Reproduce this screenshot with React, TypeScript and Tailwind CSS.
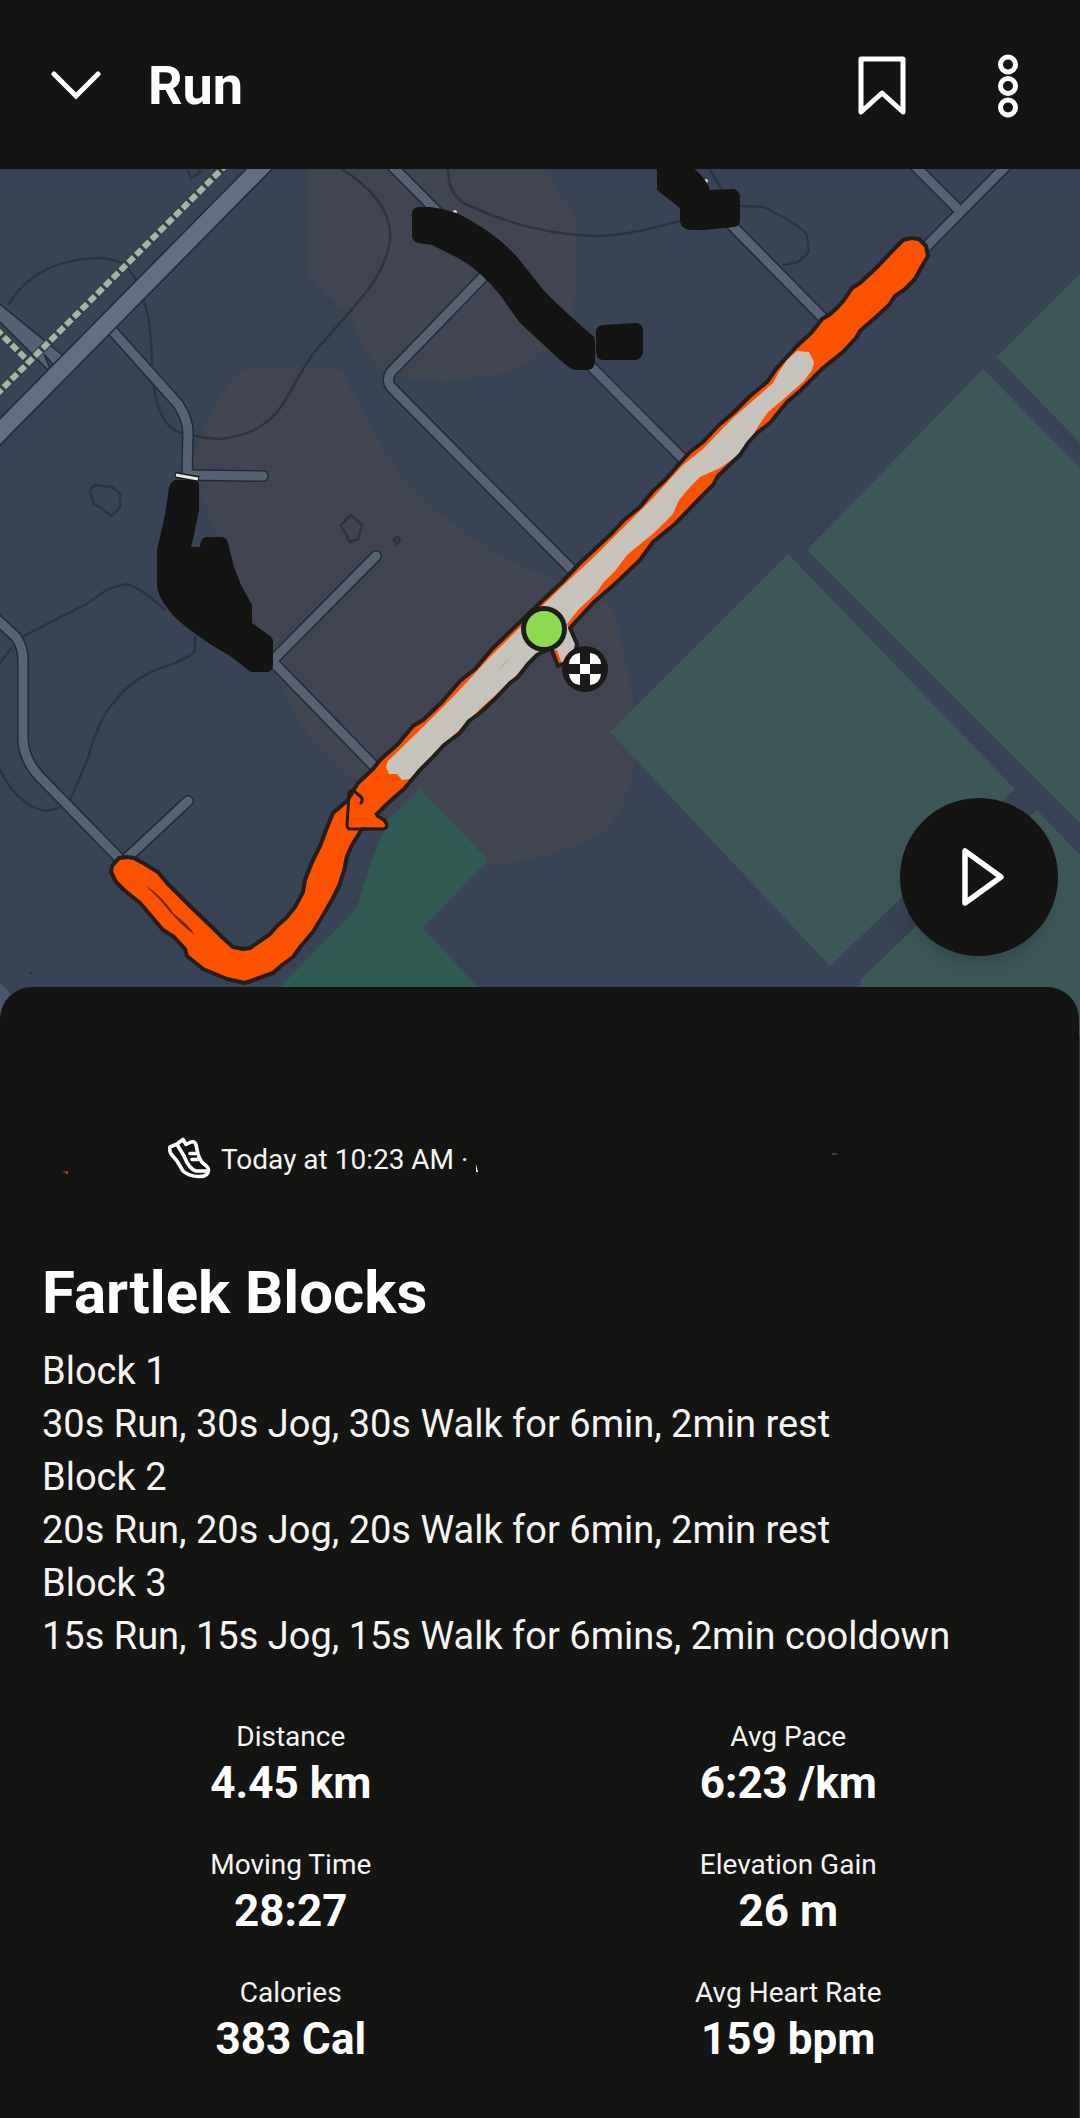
import React from "react";

const stats = [
  { label: "Distance", value: "4.45 km" },
  { label: "Avg Pace", value: "6:23 /km" },
  { label: "Moving Time", value: "28:27" },
  { label: "Elevation Gain", value: "26 m" },
  { label: "Calories", value: "383 Cal" },
  { label: "Avg Heart Rate", value: "159 bpm" },
];

const description = [
  "Block 1",
  "30s Run, 30s Jog, 30s Walk for 6min, 2min rest",
  "Block 2",
  "20s Run, 20s Jog, 20s Walk for 6min, 2min rest",
  "Block 3",
  "15s Run, 15s Jog, 15s Walk for 6mins, 2min cooldown",
];

const roads = [
  "M110 328L178 404Q188 420 188 432L187 480",
  "M187 475L263 476",
  "M387 161L690 466",
  "M486 274L391 372Q386 380 391 387L577 575",
  "M700 193L827 322",
  "M1010 162L920 253",
  "M910 161L957 208",
  "M-6 617L16 637Q23 647 23 660L23 740Q24 760 40 777L118 857",
  "M128 857L188 801",
  "M376 556L272 661L377 769",
];

const contours = [
  "M8 305Q35 260 97 258Q110 258 122 263Q150 285 152 360Q153 432 188 434Q200 438 220 439Q256 435 274 415C290 400 300 365 325 340C350 310 385 280 390 240C393 210 368 185 340 168",
  "M187 168L191 179L200 172L198 168",
  "M90 490L95 485L112 487L120 493L120 508L111 516L100 507L94 505Z",
  "M341 525L351 515L362 525L358 539L350 542Z",
  "M394 540L398 537L400 541L397 544Z",
  "M448 168Q448 198 470 206Q530 234 595 236Q630 236 690 218",
  "M740 206L764 207Q805 228 807 236L809 252L798 262L783 265",
  "M709 168L722 190M735 228L754 254",
  "M22 637L88 603L108 589L126 584Q142 588 165 610M195 635V650Q193 656 170 665Q135 675 116 700Q100 715 88 758L70 800",
  "M12 647L-2 665M-2 764C8 790 26 808 46 811L60 808",
  "M30 972L32 974",
];

const route =
  "M911 238L903 240L896 247L876 268L860 283L852 288L844 300L837 308L829 315L822 319L812 332L797 346L784 360L776 369L767 382L750 396L733 413L719 425L703 442L690 452L680 463L665 480L653 491L640 507L624 520L613 532L595 549L580 563L562 582L543 600L520 622L493 648L475 669L460 681L442 702L423 720L413 726L398 744L380 760L373 769L358 783L352 793L348 800L333 813L326 830L320 846L312 862L305 880L303 892L295 907L286 918L277 926L270 934L257 943L250 948L243 949L233 947L222 937L213 928L190 906L167 883L158 872L143 863L134 858L127 857L119 858L112 866L111 872L116 882L124 890L140 903L152 917L163 930L174 937L185 949L187 956L203 969L227 979L245 983L259 978L273 973L282 965L293 957L301 946L313 932L325 912L333 898L339 886L344 871L347 856L352 845L362 829L386 827L384 820L378 817L376 815L388 803L404 789L420 770L430 760L444 745L460 733L469 721L480 713L495 699L510 683L518 677L528 664L537 655L551 648L558 666L574 659L577 644L570 628L593 603L616 583L640 560L653 542L675 524L700 498L713 485L718 476L740 455L748 443L757 433L770 423L787 402L800 391L823 368L843 352L856 338L860 331L876 317L889 305L895 296L904 290L915 279L921 268L928 256L926 246L919 239Z";

const walked =
  "M797 351L809 352L814 362L812 370L803 382L780 402L768 412L757 428L750 442L740 454L720 468L700 477L690 487L679 500L673 514L655 532L627 555L615 571L603 583L597 592L578 610L567 624L576 647L562 664L557 650L545 648L537 653L510 682L480 709L457 732L430 758L410 779L402 780L397 774L389 774L386 767L388 761L420 730L455 695L490 657L543 605L567 582L595 556L653 498L683 465L703 449L733 418L773 383L779 372L787 360Z";

function RouteMap() {
  return (
    <svg
      viewBox="0 169 1080 868"
      className="block w-full bg-[#394356]"
      role="img"
      aria-label="Route map"
    >
      {/* terrain */}
      <path
        d="M308 160V275Q330 300 352 318Q360 350 385 372Q430 388 500 374Q545 360 572 320Q580 250 574 215L538 160Z"
        fill="#404551"
      />
      <path
        d="M240 371Q290 362 342 371Q370 430 400 475Q450 530 510 560L612 606Q628 660 636 720Q640 790 606 830Q550 866 440 868Q400 840 375 800L308 735Q275 680 262 640L190 470Q205 410 240 371Z"
        fill="#404551"
      />
      <g fill="#3d5759">
        <path d="M807 550L983 369L1080 468V823Z" />
        <path d="M997 357L1080 274V443Z" />
        <path d="M610 732L788 554L1015 789L830 966Z" />
        <path d="M1037 810L1080 855V1037H860V980Z" />
      </g>
      <path
        d="M420 789L488 860L423 928L480 989H278L357 908L370 865L388 820Z"
        fill="#2e5a52"
      />
      <path d="M-4 978L20 1004V1037H-4Z" fill="#4a5667" />

      <g fill="none" stroke="#2b363c" strokeWidth="2.5">
        {contours.map((d) => (
          <path key={d} d={d} />
        ))}
      </g>

      {/* roads */}
      <g fill="none" stroke="#1f2b3d" strokeWidth="12" strokeLinecap="round">
        {roads.map((d) => (
          <path key={d} d={d} />
        ))}
      </g>
      <g fill="none" stroke="#566172" strokeWidth="9" strokeLinecap="round">
        {roads.map((d) => (
          <path key={d} d={d} />
        ))}
      </g>
      <path
        d="M-4 301L66 358L56 368L44 354L52 374L-4 318Z"
        fill="#566172"
        stroke="#1f2b3d"
        strokeWidth="1.5"
      />
      <path d="M-10 442L275 153" stroke="#1f2b3d" strokeWidth="20" />
      <path d="M-10 442L275 153" stroke="#626e82" strokeWidth="17" />
      <g fill="none">
        <path d="M-4 395L228 163M-4 329L29 362" stroke="#30433f" strokeWidth="8" />
        <path
          d="M-4 395L228 163M-4 329L29 362"
          stroke="#a3b4a8"
          strokeWidth="6"
          strokeDasharray="8 3"
        />
      </g>
      <path d="M175 475L199 479" stroke="#1c1c1a" strokeWidth="6" />
      <path d="M176 475L198 479" stroke="#e8e8e6" strokeWidth="3" />
      <circle cx="706" cy="181" r="2" fill="#d8d8d6" />
      <circle cx="455" cy="212" r="2" fill="#d8d8d6" />

      {/* hidden places */}
      <g fill="#141412">
        <path d="M175 480H196Q200 482 199 488V510L194 535L191 547H200Q200 538 206 537H222Q227 538 228 543L234 567L241 585L252 605V623L270 636Q273 638 273 642V666Q272 671 268 672H251L230 656L213 646L200 637Q175 620 168 609Q157 595 157 585V550L165 515L169 488Q171 481 175 480Z" />
        <path d="M412 214Q412 207 420 207H430Q455 209 478 225Q500 238 518 258L545 292Q565 312 594 337Q595 340 595 345V362Q594 370 587 370H575Q570 369 560 360L520 323L500 295Q480 270 458 258L432 245L418 243Q412 241 412 235Z" />
        <path d="M596 331Q597 325 603 325L636 323Q643 324 643 330V352Q642 359 635 360H603Q597 360 596 352Z" />
        <path d="M657 160V190Q662 194 680 208V221Q681 229 690 230H705L734 227Q740 226 740 220V196Q739 190 733 189L710 190Q708 180 690 165Z" />
      </g>

      {/* route */}
      <path d={route} fill="#fc5200" />
      <path d={walked} fill="#c5c3bb" />
      <path
        d={route}
        fill="none"
        stroke="#241f1b"
        strokeWidth="4"
        strokeLinejoin="round"
      />
      <path
        d="M350 827L351 797L362 806L378 817L385 824V828Z"
        fill="#fc5200"
      />
      <path
        d="M361 803Q364 799 360 796L354 791Q349 789 349 794L347 825Q347 829 351 829L384 829Q390 826 384 820L377 816"
        fill="none"
        stroke="#2b1a12"
        strokeWidth="3"
        strokeLinecap="round"
      />
      <path d="M145 885Q162 896 174 914Q188 924 195 935Q182 926 172 914Q160 899 145 885" fill="#7a2408" />
      <path d="M499 670L511 656L504 665Z" fill="#e0672f" />

      {/* start and finish */}
      <circle cx="544" cy="629" r="23" fill="#1c1e1b" />
      <circle cx="544" cy="629" r="18" fill="#8dda51" />
      <circle cx="585" cy="669" r="23" fill="#1a1a19" />
      <g fill="#ffffff">
        <path d="M580 653V664H569Q570 654 580 653Z" />
        <path d="M590 653V664H601Q600 654 590 653Z" />
        <path d="M580 685V674H569Q570 684 580 685Z" />
        <path d="M590 685V674H601Q600 684 590 685Z" />
        <path d="M580 664H590V674H580Z" />
      </g>
    </svg>
  );
}

function ShoeIcon() {
  return (
    <svg
      viewBox="168 1136 43 42"
      className="h-[42px] w-[43px]"
      fill="none"
      stroke="currentColor"
      strokeWidth="3.6"
      strokeLinejoin="round"
      strokeLinecap="round"
      aria-hidden="true"
    >
      <path d="M170 1146L177 1143L183 1138.5L186 1143.5L191 1141Q195 1140 196 1144L198 1153Q200 1160 204 1163Q208.500 1166 208.500 1169Q208 1175.500 200 1175.500Q190 1176 183 1170L177 1160L171 1153Q169 1149 170 1146Z" />
      <path d="M177 1143.500L184 1155Q189 1168 196 1170L207 1170" />
      <path d="M190 1152.500H196M192 1158.500H198" />
    </svg>
  );
}

export default function App() {
  return (
    <div className="flex min-h-screen flex-col bg-[#2d3f45] font-[Roboto,sans-serif] text-white">
      <header className="flex items-center bg-[#141412] px-12 pt-[46px] pb-[43px]">
        <button type="button" aria-label="Close" className="flex h-20 w-14 items-center">
          <svg viewBox="0 0 56 30" className="w-14" fill="none" stroke="currentColor" strokeWidth="5">
            <path d="M6 3L28 25L50 3" strokeLinecap="round" />
          </svg>
        </button>
        <h1 className="ml-11 text-[54px] leading-[60px] font-bold">Run</h1>
        <div className="ml-auto flex items-center gap-[78px]">
          <button type="button" aria-label="Save">
            <svg viewBox="0 0 48 60" className="h-[60px] w-12" fill="none" stroke="currentColor" strokeWidth="5" strokeLinejoin="round">
              <path d="M3 3H45V56L24 37L3 56Z" />
            </svg>
          </button>
          <button type="button" aria-label="More options" className="flex w-12 justify-center">
            <svg viewBox="0 0 22 64" className="h-16 w-[22px]" fill="none" stroke="currentColor" strokeWidth="5">
              <circle cx="11" cy="10.500" r="7.500" />
              <circle cx="11" cy="32" r="7.500" />
              <circle cx="11" cy="53.500" r="7.500" />
            </svg>
          </button>
        </div>
      </header>

      <main className="flex flex-1 flex-col">
        <div className="relative">
          <RouteMap />
          <button
            type="button"
            aria-label="Play route"
            className="absolute right-[22px] bottom-[81px] flex size-[158px] items-center justify-center rounded-full bg-[#141412] shadow-xl"
          >
            <svg viewBox="0 0 42 58" className="ml-2 h-[58px] w-[42px]" fill="none" stroke="currentColor" strokeWidth="5.5" strokeLinejoin="round">
              <path d="M3 3V55L39 29Z" />
            </svg>
          </button>
        </div>

        <section className="relative -mt-[50px] mr-px flex-1 rounded-t-[32px] bg-[#141412] px-[42px] pt-[148px] pb-12">
          <div className="flex items-center">
            <svg viewBox="0 0 126 42" className="h-[42px] w-[126px]" aria-hidden="true">
              <path d="M20 35L26 34V38L24 36Z" fill="#a8431c" />
            </svg>
            <ShoeIcon />
            <p className="ml-2.5 pt-1 text-[28px] leading-[42px] text-[#f4f4f2]">Today at 10:23 AM ·</p>
            <svg viewBox="0 0 370 42" className="h-[42px] w-[370px]" aria-hidden="true">
              <path d="M8 27L10 35H8Z" fill="#f4f4f2" />
              <path d="M364 17H369" stroke="#6b6b68" />
            </svg>
          </div>

          <h2 className="mt-[78px] text-[60px] leading-[68px] font-bold">Fartlek Blocks</h2>

          <div className="mt-[18px] text-[38px] leading-[53px] text-[#f4f4f2]">
            {description.map((line) => (
              <p key={line}>{line}</p>
            ))}
          </div>

          <dl className="mt-14 grid grid-cols-2 gap-y-9 text-center">
            {stats.map((stat) => (
              <div key={stat.label}>
                <dt className="text-[28px] leading-9 text-[#f4f4f2]">{stat.label}</dt>
                <dd className="text-[44px] leading-14 font-bold">{stat.value}</dd>
              </div>
            ))}
          </dl>
        </section>
      </main>
    </div>
  );
}
